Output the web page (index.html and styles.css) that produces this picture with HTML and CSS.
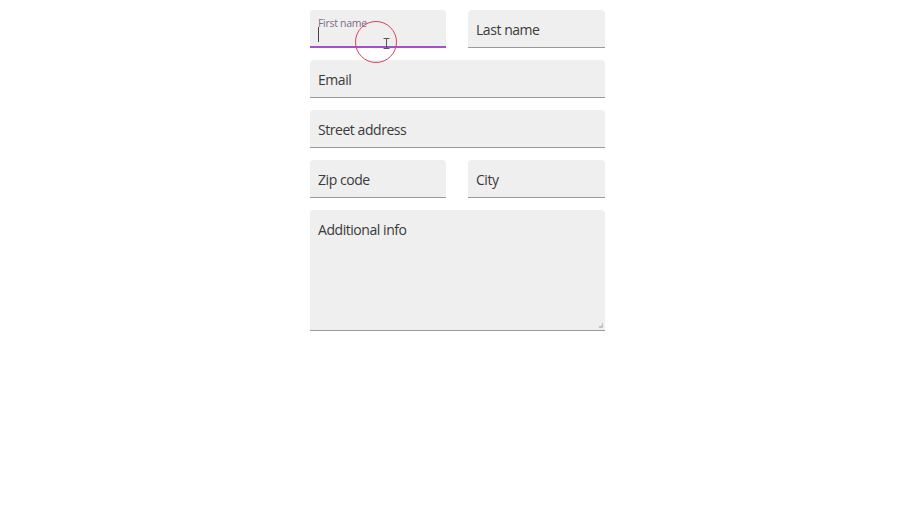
FILE: index.html
```html
<!DOCTYPE html>
<html lang="en">
<head>
<meta charset="utf-8">
<title>Address form</title>
<link rel="stylesheet" href="styles.css">
</head>
<body>
<form class="form">
  <div class="row two">
    <label class="field focused">
      <span class="float-label">First name</span>
      <span class="caret"></span>
    </label>
    <label class="field"><span class="placeholder">Last name</span></label>
  </div>
  <label class="field"><span class="placeholder">Email</span></label>
  <label class="field"><span class="placeholder">Street address</span></label>
  <div class="row two">
    <label class="field"><span class="placeholder">Zip code</span></label>
    <label class="field"><span class="placeholder">City</span></label>
  </div>
  <label class="field area">
    <span class="placeholder">Additional info</span>
    <span class="grip"></span>
  </label>
</form>
<div class="click-ring"></div>
<svg class="ibeam" width="7" height="11" viewBox="0 0 7 11">
  <path d="M0.5 0.5h6M3.5 0.5v10M0.5 10.5h6" stroke="#555" stroke-width="1" fill="none"/>
</svg>
</body>
</html>
```
FILE: styles.css
```css
html, body {
  margin: 0;
  background: #ffffff;
  font-family: "Open Sans", "Noto Sans", sans-serif;
}

.form {
  width: 295px;
  margin: 10px 0 0 310px;
  display: flex;
  flex-direction: column;
  gap: 12px;
}

.row.two {
  display: grid;
  grid-template-columns: 136px 137px;
  column-gap: 22px;
}

.field {
  position: relative;
  display: flex;
  align-items: center;
  height: 38px;
  box-sizing: border-box;
  padding: 0 8px;
  background: #efefef;
  border-radius: 4px 4px 0 0;
  border-bottom: 1px solid #9a9a9a;
}

.placeholder {
  font-size: 14px;
  letter-spacing: -0.45px;
  color: #3a3a3a;
  margin-top: 2px;
}

.field.focused {
  border-bottom: 2px solid #a64fd0;
}

.float-label {
  position: absolute;
  left: 8px;
  top: 6px;
  font-size: 10.5px;
  letter-spacing: -0.3px;
  color: #7d6a8e;
}

.caret {
  position: absolute;
  left: 8px;
  top: 17px;
  width: 1px;
  height: 15px;
  background: #444;
}

.field.area {
  height: 121px;
  align-items: flex-start;
  padding-top: 8px;
}

.grip {
  position: absolute;
  right: 2px;
  bottom: 2px;
  width: 5px;
  height: 5px;
  background: linear-gradient(135deg, transparent 50%, #c4c4c4 50%);
}

.click-ring {
  position: absolute;
  left: 355px;
  top: 21px;
  width: 42px;
  height: 42px;
  box-sizing: border-box;
  border: 1px solid #d9425c;
  border-radius: 50%;
}

.ibeam {
  position: absolute;
  left: 383px;
  top: 38px;
}
```
